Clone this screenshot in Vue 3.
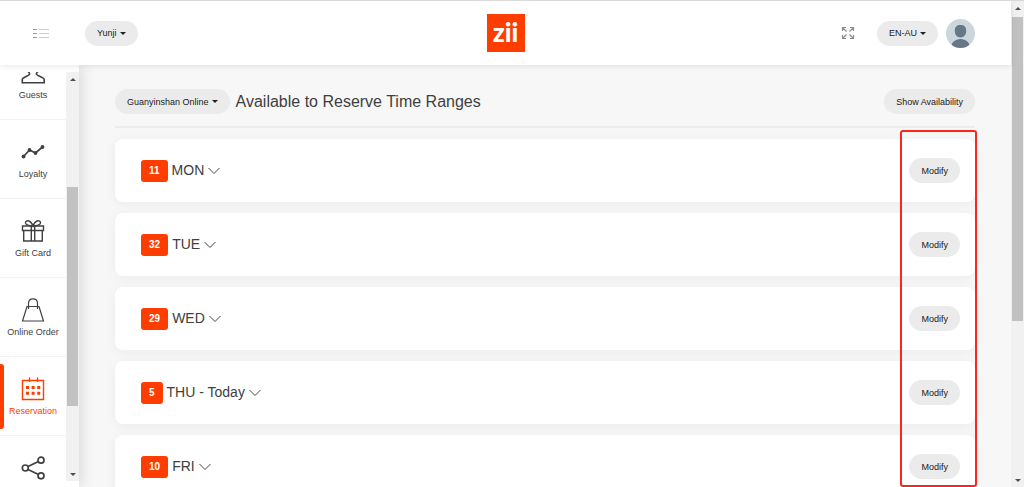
<script setup>
import { ref } from 'vue'

const active = ref('Reservation')

const menu = [
  { icon: 'guests', label: 'Guests' },
  { icon: 'loyalty', label: 'Loyalty' },
  { icon: 'gift', label: 'Gift Card' },
  { icon: 'order', label: 'Online Order' },
  { icon: 'reservation', label: 'Reservation' },
  { icon: 'share', label: '' },
]

const days = ref([
  { name: 'MON', count: 11 },
  { name: 'TUE', count: 32 },
  { name: 'WED', count: 29 },
  { name: 'THU - Today', count: 5 },
  { name: 'FRI', count: 10 },
])
</script>

<template>
<div class="app">
  <div class="page">
    <header class="topbar">
      <div class="topbar_side">
        <button class="icon_btn menu_btn" aria-label="Toggle menu">
          <svg width="16" height="12" viewBox="0 0 16 12" fill="none">
            <path d="M0 2.500h4M0 6.500h4M0 10.500h4" stroke="#999" />
            <path d="M6 2.500h10M6 6.500h10M6 10.500h10" stroke="#ccc" />
          </svg>
        </button>
        <button class="pill">Yunji<span class="caret"></span></button>
      </div>
      <a href="#" class="logo">zii</a>
      <div class="topbar_side right">
        <button class="icon_btn" aria-label="Full screen">
          <svg width="14" height="14" viewBox="0 0 14 14" fill="none" stroke="#8c8c8c" stroke-width="1.200">
            <path d="M1.500 5V1.500H5M1.500 1.500l4 4M9 1.500h3.500V5M12.500 1.500l-4 4M1.500 9v3.500H5M1.500 12.500l4-4M12.500 9v3.500H9M12.500 12.500l-4-4" />
          </svg>
        </button>
        <button class="pill lang">EN-AU<span class="caret"></span></button>
        <a href="#" class="avatar" aria-label="Account">
          <svg width="29" height="29" viewBox="0 0 29 29">
            <clipPath id="round"><circle cx="14.500" cy="14.500" r="14.500" /></clipPath>
            <g clip-path="url(#round)">
              <rect width="29" height="29" fill="#cbd6dd" />
              <path d="M14.500 6c3.800 0 5.700 2 5.700 5.800 0 4-2.200 6.700-5.700 6.700s-5.700-2.700-5.700-6.700C8.800 8 10.700 6 14.500 6z" fill="#667786" />
              <path d="M5 29c0-5.500 4-9 9.500-9s9.500 3.500 9.500 9z" fill="#667786" />
            </g>
          </svg>
        </a>
      </div>
    </header>

    <div class="body">
      <aside class="sidebar">
        <nav class="menu">
          <a
            v-for="item in menu"
            :key="item.icon"
            href="#"
            class="menu_item"
            :class="{ active: item.label === active }"
            :aria-label="item.icon"
            @click.prevent="active = item.label"
          >
            <svg width="24" height="24" viewBox="0 0 24 24" fill="none" stroke="currentColor" stroke-width="1.4">
              <path v-if="item.icon === 'guests'" d="M6.500 10c1.200 1 2.500 2.200 2 3.300C7.800 15 1.300 16.500 1.300 18.500v3.200h21.900v-3.200c0-2-7-3.500-7.700-5.200-.5-1.100.8-2.300 2-3.300" stroke-width="1.600" />
              <template v-else-if="item.icon === 'loyalty'">
                <path d="M2.500 16.500l6-6.500 6 3 7-6" stroke-width="1.700" />
                <g fill="currentColor" stroke="none">
                  <circle cx="2.500" cy="16.500" r="1.900" />
                  <circle cx="8.500" cy="10" r="1.900" />
                  <circle cx="14.500" cy="13" r="1.900" />
                  <circle cx="21.500" cy="7" r="1.900" />
                </g>
              </template>
              <template v-else-if="item.icon === 'gift'">
                <path d="M1.500 7h21v4.500h-21zM2.700 11.500h18.600V22H2.700zM10.300 7v15M13.700 7v15" />
                <path d="M12 7C9 6.800 5 6.500 4.500 4.200 4.200 2.300 6 1.400 8 2c2.200.7 3.200 3 4 5 .8-2 1.800-4.300 4-5 2-.6 3.800.3 3.500 2.200C19 6.500 15 6.800 12 7z" />
              </template>
              <template v-else-if="item.icon === 'order'">
                <path d="M6 8.500h12l4.500 14.500h-21z" stroke-width="1.200" />
                <path d="M7.500 11V5.500C7.500 2.500 9 .8 12 .8s4.500 1.700 4.500 4.700V11" stroke-width="1.200" />
              </template>
              <template v-else-if="item.icon === 'reservation'">
                <path d="M1.500 3.500h21v19h-21zM8.500.5V5M16.500.5V5" />
                <path d="M5 10.500h3M10.600 10.500h3M16.200 10.500h3M5 16.300h3M10.600 16.300h3M16.200 16.300h3" stroke-width="3" />
              </template>
              <g v-else stroke-width="1.700">
                <path d="M7 10.500l10.500-5M7 13.500l10.500 5" />
                <circle cx="4.300" cy="12" r="3" />
                <circle cx="20" cy="4.200" r="3" />
                <circle cx="20" cy="19.800" r="3" />
              </g>
            </svg>
            <span v-if="item.label">{{ item.label }}</span>
          </a>
        </nav>
        <div class="scrollbar side_scroll">
          <i class="arrow up"></i>
          <div class="thumb"></div>
          <i class="arrow down"></i>
        </div>
      </aside>

      <main class="content">
        <div class="heading">
          <button class="pill">Guanyinshan Online<span class="caret"></span></button>
          <h1>Available to Reserve Time Ranges</h1>
          <button class="pill">Show Availability</button>
        </div>
        <div class="days">
          <section v-for="day in days" :key="day.name" class="day">
            <span class="badge">{{ day.count }}</span>
            <h2>{{ day.name }}</h2>
            <svg width="12" height="8" viewBox="0 0 12 8" fill="none" stroke="#444">
              <path d="M.5 1L6 6.500 11.500 1" />
            </svg>
            <button class="pill modify">Modify</button>
          </section>
          <div class="highlight"></div>
        </div>
      </main>
    </div>
  </div>

  <div class="scrollbar page_scroll">
    <i class="arrow up"></i>
    <div class="thumb"></div>
    <i class="arrow down"></i>
  </div>
</div>
</template>

<style>
body {
  margin: 0;
  overflow: hidden;
}
</style>

<style scoped>
* {
  box-sizing: border-box;
}

.app {
  display: flex;
  height: 100vh;
  overflow: hidden;
  border-top: 1px solid #d9d9d9;
  background: #f7f7f7;
  color: #404040;
  font-family: "Liberation Sans", Arial, sans-serif;
  font-size: 9px;
}

.page {
  flex: 1;
  min-width: 0;
  display: flex;
  flex-direction: column;
}

button {
  border: 0;
  padding: 0;
  font: inherit;
  color: inherit;
  background: none;
  cursor: pointer;
}

a {
  color: inherit;
  text-decoration: none;
}

.topbar {
  flex: none;
  display: flex;
  align-items: center;
  height: 64px;
  padding: 0 36px 0 33px;
  background: #fff;
  box-shadow: 0 1px 6px rgba(0, 0, 0, .1);
  position: relative;
  z-index: 2;
}

.topbar_side {
  flex: 1;
  display: flex;
  align-items: center;
}

.right {
  justify-content: flex-end;
}

.icon_btn {
  display: flex;
}

.menu_btn {
  margin-right: 36px;
}

.lang {
  margin: 0 8px 0 22px;
}

.pill {
  flex: none;
  display: flex;
  align-items: center;
  height: 25px;
  padding: 0 12px;
  border-radius: 13px;
  background: #ebebeb;
  color: #212121;
}

.caret {
  margin-left: 3px;
  border: 3px solid transparent;
  border-top-color: #212121;
  border-bottom: 0;
}

.logo {
  width: 38px;
  height: 38px;
  margin-left: 3px;
  background: #ff3d00;
  color: #fff;
  font-family: Lato, "Liberation Sans", sans-serif;
  font-size: 26px;
  font-weight: 900;
  line-height: 36px;
  text-align: center;
}

.avatar {
  display: flex;
}

.body {
  flex: 1;
  min-height: 0;
  display: flex;
}

.sidebar {
  flex: none;
  display: flex;
  width: 79px;
  padding: 7px 0 6px;
  background: #fff;
  box-shadow: 0 0 16px rgba(0, 0, 0, .16);
}

.menu {
  flex: 1;
  display: flex;
  flex-direction: column;
  overflow: hidden;
}

/* list scrolled part way down */
.menu_item:first-child {
  margin-top: -31px;
}

.menu_item {
  flex: none;
  display: flex;
  flex-direction: column;
  align-items: center;
  gap: 3px;
  height: 79px;
  padding-top: 20px;
  border-bottom: 1px solid #f3f3f3;
  line-height: 14px;
  position: relative;
}

.active {
  color: #ff3d00;
}

.active::before {
  content: '';
  position: absolute;
  left: 0;
  top: 7px;
  bottom: 6px;
  width: 4px;
  border-radius: 0 3px 3px 0;
  background: #ff3d00;
}

.scrollbar {
  flex: none;
  display: flex;
  flex-direction: column;
  align-items: center;
  width: 13px;
  padding: 6px 0 5px;
  background: #f1f1f1;
}

.thumb {
  width: 11px;
  background: #c1c1c1;
}

.side_scroll .thumb {
  margin-top: 106px;
  height: 55%;
}

.page_scroll .thumb {
  margin-top: 7px;
  height: 64%;
}

.arrow {
  border: 3px solid transparent;
}

.up {
  border-top: 0;
  border-bottom-color: #505050;
}

.down {
  margin-top: auto;
  border-bottom: 0;
  border-top-color: #505050;
}

.content {
  flex: 1;
  min-width: 0;
  padding: 24px 36px 0;
}

.heading {
  display: flex;
  align-items: center;
  height: 39px;
  padding-bottom: 12px;
  border-bottom: 2px solid #ececec;
}

h1 {
  flex: 1;
  margin: 0 0 0 6px;
  font-size: 16px;
  font-weight: 400;
  line-height: 20px;
}

.days {
  display: flex;
  flex-direction: column;
  gap: 11px;
  padding-top: 11px;
  position: relative;
}

.day {
  display: flex;
  align-items: center;
  height: 63px;
  padding: 0 15px 0 26px;
  border-radius: 8px;
  background: #fff;
  box-shadow: 0 2px 12px rgba(0, 0, 0, .05);
}

.badge {
  padding: 0 8px;
  border-radius: 3px;
  background: #ff3d00;
  color: #fff;
  font-size: 10px;
  font-weight: 700;
  line-height: 22px;
}

h2 {
  margin: 0 4px 2px 4px;
  font-size: 14px;
  font-weight: 400;
}

.modify {
  margin-left: auto;
}

/* frame round the Modify column */
.highlight {
  position: absolute;
  top: 2px;
  right: -2px;
  width: 77px;
  height: 357px;
  border: 2px solid #f9281e;
  border-radius: 3px;
}
</style>
